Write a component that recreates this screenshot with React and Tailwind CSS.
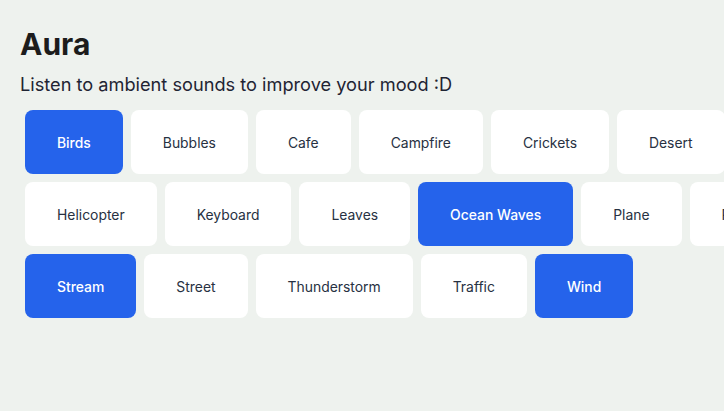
import React, { useState } from 'react';

const SOUNDS = [
    'Birds', 'Bubbles', 'Cafe', 'Campfire', 'Crickets', 'Desert', 'Forest',
    'Helicopter', 'Keyboard', 'Leaves', 'Ocean Waves', 'Plane', 'Rain',
    'Stream', 'Street', 'Thunderstorm', 'Traffic', 'Wind',
];

const App = () => {
    const [active, setActive] = useState(['Birds', 'Ocean Waves', 'Stream', 'Wind']);

    const toggle = (name) => {
        setActive((prev) => (prev.includes(name) ? prev.filter((n) => n !== name) : [...prev, name]));
    };

    return (
        <div
            className="w-screen h-screen overflow-hidden bg-[#eef2ee] text-[#1f2937]"
            style={{ fontFamily: 'Inter, "Noto Sans", sans-serif' }}
        >
            <div className="pt-[26px] pl-[20px]">
                <h1 className="text-3xl font-bold text-[#1c1c1c]">Aura</h1>
                <p className="mt-2 text-[18.2px] leading-7 text-[#1f2433]">Listen to ambient sounds to improve your mood :D</p>
                <div className="mt-[12px] ml-[5px] w-[860px] flex flex-wrap gap-2">
                    {SOUNDS.map((name) => {
                        const on = active.includes(name);
                        return (
                            <button
                                key={name}
                                onClick={() => toggle(name)}
                                className={
                                    on
                                        ? 'h-16 px-8 pt-0.5 rounded-lg text-[13.9px] leading-5 font-medium bg-[#2563eb] text-white'
                                        : 'h-16 px-8 pt-0.5 rounded-lg text-[13.9px] leading-5 bg-white text-[#273142]'
                                }
                            >
                                {name}
                            </button>
                        );
                    })}
                </div>
            </div>
        </div>
    );
};

export default App;
